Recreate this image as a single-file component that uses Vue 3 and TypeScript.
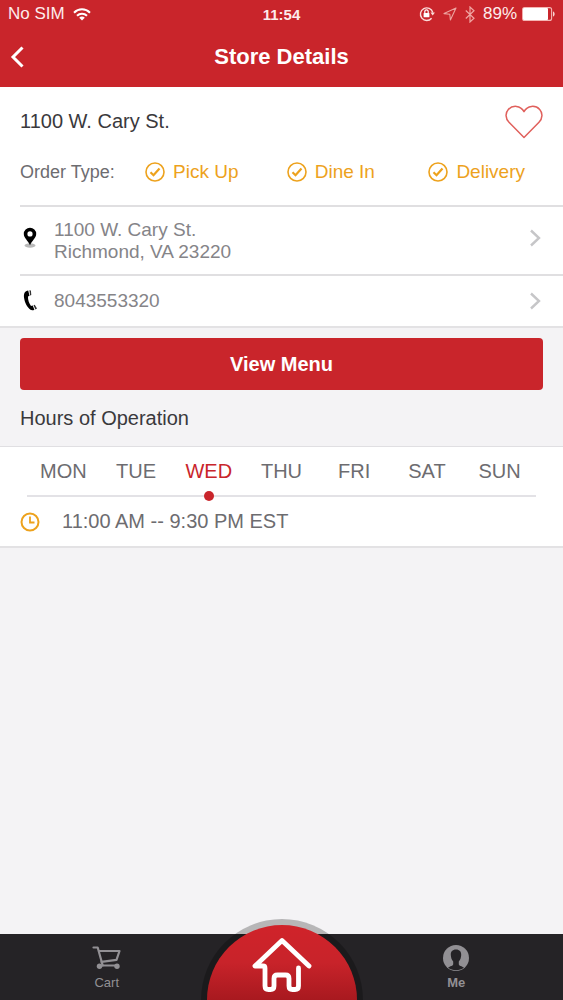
<script setup lang="ts">
import { ref } from 'vue'

interface DayHours {
  name: string
  hours: string
}

const orderTypes: string[] = ['Pick Up', 'Dine In', 'Delivery']

const week: DayHours[] = ['MON', 'TUE', 'WED', 'THU', 'FRI', 'SAT', 'SUN'].map((name) => ({
  name,
  hours: '11:00 AM -- 9:30 PM EST',
}))

const selectedDay = ref(2)
const favorite = ref(false)
</script>

<template>
  <div class="screen">
    <header class="header">
      <div class="status">
        <div class="status-left">
          <span>No SIM</span>
          <svg width="18" height="13" viewBox="0 0 18 13" aria-hidden="true">
            <g fill="none" stroke="#fff" stroke-width="2">
              <path d="M1 4.800C5.500.2 12.500.2 17 4.800" />
              <path d="M4 7.800C6.800 5 11.200 5 14 7.800" />
            </g>
            <path d="M6.200 9.700c1.600-1.500 4-1.500 5.600 0L9 12.600z" fill="#fff" />
          </svg>
        </div>
        <time class="clock">11:54</time>
        <div class="status-right">
          <svg width="16" height="16" viewBox="0 0 16 16" aria-hidden="true">
            <path d="M12.600 12.200A6.300 6.300 0 1 1 13.800 6.500" fill="none" stroke="#fbdcd9" stroke-width="1.400" />
            <path d="M11.500 6.600h4.400l-2.200 3z" fill="#fbdcd9" />
            <rect x="4.600" y="7" width="5.800" height="4.300" rx=".5" fill="#fff" />
            <path d="M5.800 7V5.600a1.700 1.700 0 0 1 3.400 0V7" fill="none" stroke="#fff" stroke-width="1.200" />
          </svg>
          <svg width="14" height="14" viewBox="0 0 14 14" aria-hidden="true">
            <path d="M13 1 1 6.600l5.800.7.600 5.700z" fill="none" stroke="#eda39f" stroke-width="1.100" stroke-linejoin="round" />
          </svg>
          <svg width="10" height="17" viewBox="0 0 10 17" aria-hidden="true">
            <path d="M.8 4.500 9 12.200 5 16V1l4 3.800L.8 12.500" fill="none" stroke="#f0a5a2" stroke-width="1.200" />
          </svg>
          <span>89%</span>
          <svg class="battery" width="33" height="14" viewBox="0 0 33 14" aria-hidden="true">
            <rect x=".6" y=".6" width="29" height="12.800" rx="2" fill="none" stroke="#f4b5b2" stroke-width="1.100" />
            <rect x="1" y="1" width="25" height="12" rx="1" fill="#fff" />
            <path d="M31 4.500c2.200.6 2.200 4.400 0 5z" fill="#f9d3d1" />
          </svg>
        </div>
      </div>
      <nav class="nav">
        <button class="back" type="button" aria-label="Back">
          <svg width="14" height="22" viewBox="0 0 14 22" aria-hidden="true">
            <path d="M12.500 1.500 3 11l9.500 9.500" fill="none" stroke="#fff" stroke-width="3" />
          </svg>
        </button>
        <h1 class="title">Store Details</h1>
      </nav>
    </header>

    <main class="content">
      <section class="card">
        <div class="store-row">
          <h2 class="heading">1100 W. Cary St.</h2>
          <button
            class="heart"
            type="button"
            aria-label="Favorite"
            :aria-pressed="favorite"
            @click="favorite = !favorite"
          >
            <svg width="38" height="34" viewBox="0 0 38 34" aria-hidden="true">
              <path
                d="M19 32.500 4 17.300C.2 13.300.2 7.800 3.300 4.400 7.600-.1 15.500.2 19 6.600 22.500.2 30.400-.1 34.700 4.400c3.100 3.400 3.100 8.900-.7 12.900z"
                :fill="favorite ? '#e0605c' : 'none'"
                stroke="#e0605c"
                stroke-width="1.500"
                stroke-linejoin="round"
              />
            </svg>
          </button>
        </div>
        <div class="order-row">
          <span class="order-label">Order Type:</span>
          <ul class="order-types">
            <li v-for="type in orderTypes" :key="type" class="order-type">
              <svg width="20" height="20" viewBox="0 0 20 20" aria-hidden="true">
                <circle cx="10" cy="10" r="9" fill="none" stroke="#eda21d" stroke-width="1.600" />
                <path d="m5.500 10.200 3 3 6-6.800" fill="none" stroke="#eda21d" stroke-width="2.200" />
              </svg>
              <span>{{ type }}</span>
            </li>
          </ul>
        </div>
        <a class="link-row address" href="#map">
          <svg width="20" height="22" viewBox="0 0 20 22" aria-hidden="true">
            <ellipse cx="10" cy="18.500" rx="5.500" ry="2.200" fill="#b9b9b9" />
            <path
              d="M10 .8a6.200 6.200 0 0 0-6.200 6.200c0 4 4.200 6.500 6.200 11.200 2-4.700 6.200-7.200 6.200-11.200A6.200 6.200 0 0 0 10 .8zm0 3.500a2.600 2.600 0 1 1 0 5.200 2.600 2.600 0 0 1 0-5.200z"
              fill="#000"
              fill-rule="evenodd"
            />
          </svg>
          <span class="row-text">1100 W. Cary St.<br />Richmond, VA 23220</span>
          <svg width="12" height="18" viewBox="0 0 12 18" aria-hidden="true">
            <path d="m2 1.500 8 7.500-8 7.500" fill="none" stroke="#c6c6c8" stroke-width="2.400" />
          </svg>
        </a>
        <a class="link-row phone" href="tel:8043553320">
          <svg width="20" height="22" viewBox="0 0 20 22" aria-hidden="true">
            <path
              d="M8.200.5C5 .8 3.600 3.500 4 7.500c.6 5 3.300 10 6.500 12.300 1 .7 2.700.6 3.900-.1l-1.700-4.200-1.700.4C9 13.500 7.800 9.500 8 6.500l1.500-.8z"
              fill="#000"
            />
            <path d="m9.400.2 1.500.2.400 4.700-1.200.4zM13.500 15.300l1.200-.5 2.300 3.700-1.600 1z" fill="#333" />
          </svg>
          <span class="row-text">8043553320</span>
          <svg width="12" height="18" viewBox="0 0 12 18" aria-hidden="true">
            <path d="m2 1.500 8 7.500-8 7.500" fill="none" stroke="#c6c6c8" stroke-width="2.400" />
          </svg>
        </a>
      </section>

      <button class="menu-button" type="button">View Menu</button>
      <h2 class="heading hours-heading">Hours of Operation</h2>

      <section class="hours">
        <div class="days">
          <button
            v-for="(day, index) in week"
            :key="day.name"
            type="button"
            class="day"
            :class="{ selected: index === selectedDay }"
            :aria-pressed="index === selectedDay"
            @click="selectedDay = index"
          >
            {{ day.name }}
          </button>
        </div>
        <div class="time-row">
          <svg width="20" height="20" viewBox="0 0 20 20" aria-hidden="true">
            <circle cx="10" cy="10" r="8.500" fill="none" stroke="#eda21d" stroke-width="2" />
            <path d="M10 4.500v6h4.500" fill="none" stroke="#eda21d" stroke-width="1.800" />
          </svg>
          <span>{{ week[selectedDay].hours }}</span>
        </div>
      </section>
    </main>

    <nav class="tabs">
      <a class="tab" href="#cart">
        <svg width="30" height="26" viewBox="0 0 30 26" aria-hidden="true">
          <g fill="none" stroke="#929094" stroke-width="2.200" stroke-linejoin="round" stroke-linecap="round">
            <path d="M1.500 2.500h4.200l5 18" />
            <path d="M7 6h20.500l-3 8.800-15 2" />
            <path d="M8 20.500h18" />
          </g>
          <circle cx="7.500" cy="21.300" r="2.700" fill="#929094" />
          <circle cx="25" cy="21.300" r="2.700" fill="#929094" />
        </svg>
        <span>Cart</span>
      </a>
      <a class="home" href="#home" aria-label="Home">
        <svg width="162" height="81" viewBox="0 0 162 81" aria-hidden="true">
          <defs>
            <linearGradient id="home-red" x1="0" y1="0" x2="0" y2="1">
              <stop offset="0" stop-color="#d0232a" />
              <stop offset=".25" stop-color="#c8232a" />
              <stop offset=".5" stop-color="#a8191f" />
            </linearGradient>
          </defs>
          <circle cx="81" cy="81" r="81" fill="#000" fill-opacity=".25" />
          <circle cx="81" cy="81" r="75" fill="url(#home-red)" />
          <path
            d="M108 47 81 21.500 54 47h8q2 0 2 2v18q0 3.500 3.500 3.500h2q3.500 0 3.500-3.500v-7.500q0-3.500 3.500-3.500h8q3.500 0 3.500 3.500V67q0 3.500 3.500 3.500h2.500q3.500 0 3.500-3.500V49"
            fill="none"
            stroke="#fff"
            stroke-width="4.800"
            stroke-linecap="round"
            stroke-linejoin="round"
          />
        </svg>
      </a>
      <a class="tab tab-me" href="#me">
        <svg width="26" height="26" viewBox="0 0 26 26" aria-hidden="true">
          <circle cx="13" cy="13" r="13" fill="#929094" />
          <path
            d="M13 4.500c-3.600 0-5.400 2.300-5.200 5.400.1 2 .7 4.800 2.400 6.600v2.800c0 1.600-3.200 1.900-5.200 3.400 4.300 3.300 11.700 3.300 16 0-2-1.500-5.200-1.800-5.200-3.400v-2.800c1.700-1.800 2.300-4.600 2.400-6.600.2-3.100-1.600-5.400-5.200-5.400z"
            fill="#252326"
          />
        </svg>
        <span>Me</span>
      </a>
    </nav>
  </div>
</template>

<style>
body {
  margin: 0;
}
</style>

<style scoped>
.screen {
  display: flex;
  flex-direction: column;
  min-height: 100vh;
  background: #f4f3f5;
  color: #3a393c;
  font-family: 'Liberation Sans', Arial, Helvetica, sans-serif;
}

button {
  margin: 0;
  padding: 0;
  border: 0;
  background: none;
  color: inherit;
  font: inherit;
  cursor: pointer;
}

a {
  color: inherit;
  text-decoration: none;
}

svg {
  display: block;
  flex: none;
}

.header {
  background: #c9252b;
  color: #fff;
}

.status {
  display: grid;
  grid-template-columns: 1fr auto 1fr;
  align-items: center;
  height: 28px;
  padding: 0 8px;
  font-size: 17px;
  color: #fdeceb;
}

.status-left,
.status-right {
  display: flex;
  align-items: center;
  gap: 8px;
}

.status-right {
  justify-content: flex-end;
}

.battery {
  margin-left: -3px;
}

.clock {
  font-size: 15px;
  font-weight: bold;
}

.nav {
  display: grid;
  grid-template-columns: 1fr auto 1fr;
  align-items: center;
  height: 58px;
  padding-bottom: 1px;
}

.back {
  justify-self: start;
  padding: 8px 10px;
}

.title {
  margin: 0;
  font-size: 22px;
  font-weight: bold;
}

.content {
  flex: 1;
}

.card {
  padding-left: 20px;
  border-bottom: 2px solid #e3e2e4;
  background: #fff;
}

.store-row {
  display: flex;
  align-items: center;
  justify-content: space-between;
  height: 69px;
  padding-right: 20px;
}

.heading {
  margin: 0;
  font-size: 20px;
  font-weight: normal;
}

.order-row {
  display: flex;
  align-items: center;
  height: 32px;
  padding: 0 38px 17px 0;
}

.order-label {
  flex: none;
  width: 125px;
  font-size: 18px;
  color: #6d6c70;
}

.order-types {
  display: grid;
  flex: 1;
  grid-template-columns: 1fr 1fr auto;
  margin: 0;
  padding: 0;
  list-style: none;
}

.order-type {
  display: flex;
  align-items: center;
  gap: 8px;
  font-size: 19px;
  color: #eda21d;
}

.link-row {
  display: flex;
  align-items: center;
  gap: 14px;
  padding-right: 22px;
  border-top: 2px solid #e0dfe1;
  font-size: 19px;
  line-height: 22px;
  color: #858488;
}

.address {
  height: 67px;
}

.address svg {
  margin-bottom: 6px;
}

.phone {
  height: 50px;
}

.row-text {
  flex: 1;
}

.menu-button {
  display: block;
  width: calc(100% - 40px);
  height: 52px;
  margin: 10px 20px 0;
  border-radius: 4px;
  background: #c9252b;
  color: #fff;
  font-size: 20px;
  font-weight: bold;
}

.hours-heading {
  padding: 0 20px;
  line-height: 56px;
}

.hours {
  border-top: 1px solid #e0dfe2;
  border-bottom: 2px solid #e3e2e4;
  background: #fff;
}

.days {
  display: grid;
  grid-template-columns: repeat(7, 1fr);
  margin: 0 27px;
  border-bottom: 2px solid #e3e2e6;
}

.day {
  position: relative;
  height: 48px;
  font-size: 20px;
  color: #6d6c70;
}

.day.selected {
  color: #c9252b;
}

.day.selected::after {
  position: absolute;
  bottom: -6px;
  left: 50%;
  width: 10px;
  height: 10px;
  margin-left: -5px;
  border-radius: 50%;
  background: #c9252b;
  content: '';
}

.time-row {
  display: flex;
  align-items: center;
  gap: 22px;
  height: 49px;
  padding: 0 20px;
  font-size: 20px;
  color: #6d6c70;
}

.tabs {
  position: relative;
  display: flex;
  justify-content: space-between;
  gap: 136px;
  height: 66px;
  background: #252326;
}

.tab {
  display: flex;
  flex: 1;
  flex-direction: column;
  align-items: center;
  justify-content: center;
  gap: 4px;
  font-size: 13px;
  line-height: 15px;
  color: #929094;
}

.tab-me {
  font-weight: bold;
}

.home {
  position: absolute;
  bottom: 0;
  left: 50%;
  margin-left: -81px;
}
</style>
